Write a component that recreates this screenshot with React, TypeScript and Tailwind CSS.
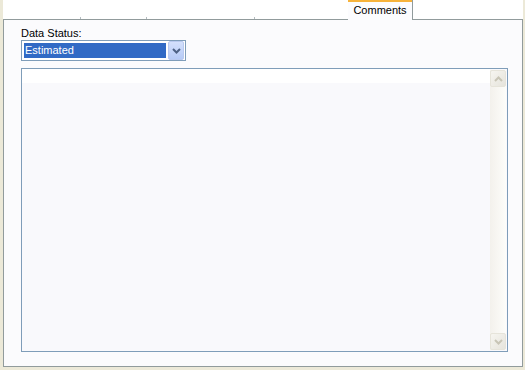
import React from 'react';

function Chevron({ up, className }: { up?: boolean; className?: string }) {
  return (
    <svg className={className} width="9" height="6" viewBox="0 0 9 6" fill="none" stroke="currentColor" strokeWidth={2}>
      <path d={up ? 'M1 5l3.5-3.5L8 5' : 'M1 1l3.5 3.5L8 1'} />
    </svg>
  );
}

function ScrollButton({ up }: { up?: boolean }) {
  return (
    <div className="flex h-[17px] w-[16px] items-center justify-center rounded-[2px] border border-[#e6e4da] bg-gradient-to-br from-[#f6f5f0] to-[#e6e4dc]">
      <Chevron up={up} className="text-[#c8c5b6]" />
    </div>
  );
}

export default function App() {
  return (
    <div
      className="flex h-[370px] w-[525px] flex-col bg-[#ece9d8] pb-[3px] pl-[3px] pr-[2px] text-[11px] text-black"
      style={{ fontFamily: '"Liberation Sans", Arial, sans-serif' }}
    >
      {/* Tab strip */}
      <div className="flex h-[20px] bg-white">
        <div className="flex flex-1 items-end border-b border-[#919b9c]">
          <div className="w-[77px]" />
          <div className="mb-[0px] h-[2px] w-[1px] bg-[#b4bcc0]" />
          <div className="w-[65px]" />
          <div className="h-[2px] w-[1px] bg-[#b4bcc0]" />
          <div className="w-[107px]" />
          <div className="h-[2px] w-[1px] bg-[#b4bcc0]" />
        </div>
        <div className="flex w-[65px] flex-col border-r border-[#919b9c] bg-[#fcfcfe]">
          <div className="h-[2px] bg-[#f7b33b]" />
          <div className="flex flex-1 items-start justify-center pt-[2px] leading-[13px]">Comments</div>
        </div>
        <div className="w-[110px] border-b border-[#919b9c]" />
      </div>

      {/* Panel */}
      <div className="flex flex-1 flex-col border-x border-b border-[#919b9c] bg-[#fbfbfd] pl-[17px] pr-[14px] pt-[7px] pb-[14px]">
        <div className="leading-[13px]">Data Status:</div>

        <div className="mt-[0px] flex h-[21px] w-[165px] items-center border border-[#7f9db9] bg-white pl-[2px] pr-[1px]">
          <div className="flex h-[15px] flex-1 items-center bg-[#316ac5] pl-[1px] leading-[13px] text-white">Estimated</div>
          <div className="ml-[2px] flex h-[19px] w-[16px] items-center justify-center rounded-[2px] border border-[#b9c9ef] bg-gradient-to-b from-[#d4e0fc] to-[#b6caf6]">
            <Chevron className="text-[#4d6185]" />
          </div>
        </div>

        {/* Comments box */}
        <div className="mt-[7px] flex flex-1 border border-[#7f9db9] bg-[#f9f9fc]">
          <div className="flex flex-1 flex-col">
            <div className="h-[14px] bg-white" />
          </div>
          <div className="my-[1px] mr-[1px] flex w-[16px] flex-col justify-between bg-gradient-to-r from-[#f3f1ec] to-[#fdfdfa]">
            <ScrollButton up />
            <ScrollButton />
          </div>
        </div>
      </div>
    </div>
  );
}
